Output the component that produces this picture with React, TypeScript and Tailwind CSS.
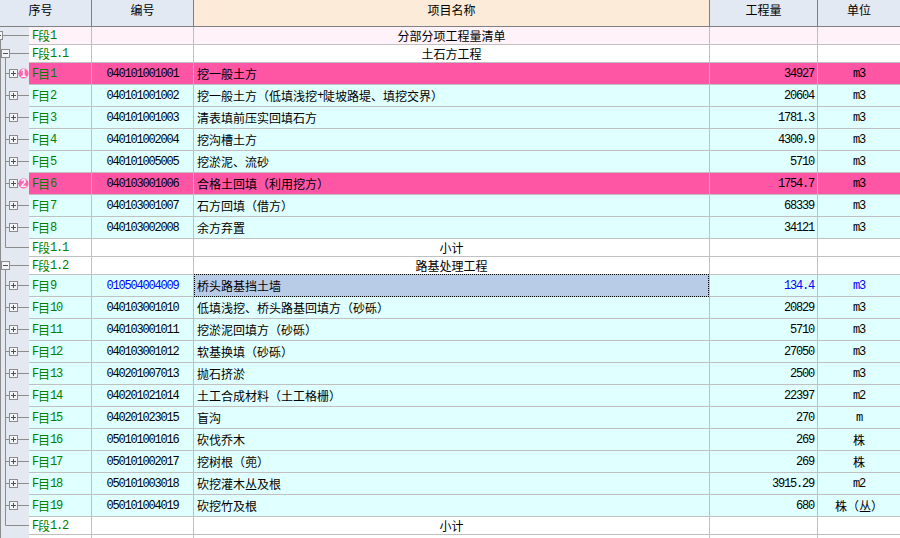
import React from "react";

type Kind = "root" | "seg" | "item" | "end";

type Row = {
  kind: Kind;
  label: string;
  code?: string;
  name?: string;
  qty?: string;
  unit?: string;
  bg: string;
  center?: boolean;
  badge?: number;
  blue?: boolean;
  selected?: boolean;
};

const CYAN = "bg-[#e0ffff]";
const PINK = "bg-[#ff55a5]";
const WHITE = "bg-white";
const ROSE = "bg-[#fff3f9]";

const rows: Row[] = [
  { kind: "root", label: "F段1", name: "分部分项工程量清单", center: true, bg: ROSE },
  { kind: "seg", label: "F段1.1", name: "土石方工程", center: true, bg: WHITE },
  { kind: "item", label: "F目1", code: "040101001001", name: "挖一般土方", qty: "34927", unit: "m3", bg: PINK, badge: 1 },
  { kind: "item", label: "F目2", code: "040101001002", name: "挖一般土方（低填浅挖+陡坡路堤、填挖交界）", qty: "20604", unit: "m3", bg: CYAN },
  { kind: "item", label: "F目3", code: "040101001003", name: "清表填前压实回填石方", qty: "1781.3", unit: "m3", bg: CYAN },
  { kind: "item", label: "F目4", code: "040101002004", name: "挖沟槽土方", qty: "4300.9", unit: "m3", bg: CYAN },
  { kind: "item", label: "F目5", code: "040101005005", name: "挖淤泥、流砂", qty: "5710", unit: "m3", bg: CYAN },
  { kind: "item", label: "F目6", code: "040103001006", name: "合格土回填（利用挖方）", qty: "1754.7", unit: "m3", bg: PINK, badge: 2 },
  { kind: "item", label: "F目7", code: "040103001007", name: "石方回填（借方）", qty: "68339", unit: "m3", bg: CYAN },
  { kind: "item", label: "F目8", code: "040103002008", name: "余方弃置", qty: "34121", unit: "m3", bg: CYAN },
  { kind: "end", label: "F段1.1", name: "小计", center: true, bg: WHITE },
  { kind: "seg", label: "F段1.2", name: "路基处理工程", center: true, bg: WHITE },
  { kind: "item", label: "F目9", code: "010504004009", name: "桥头路基挡土墙", qty: "134.4", unit: "m3", bg: CYAN, blue: true, selected: true },
  { kind: "item", label: "F目10", code: "040103001010", name: "低填浅挖、桥头路基回填方（砂砾）", qty: "20829", unit: "m3", bg: CYAN },
  { kind: "item", label: "F目11", code: "040103001011", name: "挖淤泥回填方（砂砾）", qty: "5710", unit: "m3", bg: CYAN },
  { kind: "item", label: "F目12", code: "040103001012", name: "软基换填（砂砾）", qty: "27050", unit: "m3", bg: CYAN },
  { kind: "item", label: "F目13", code: "040201007013", name: "抛石挤淤", qty: "2500", unit: "m3", bg: CYAN },
  { kind: "item", label: "F目14", code: "040201021014", name: "土工合成材料（土工格栅）", qty: "22397", unit: "m2", bg: CYAN },
  { kind: "item", label: "F目15", code: "040201023015", name: "盲沟", qty: "270", unit: "m", bg: CYAN },
  { kind: "item", label: "F目16", code: "050101001016", name: "砍伐乔木", qty: "269", unit: "株", bg: CYAN },
  { kind: "item", label: "F目17", code: "050101002017", name: "挖树根（蔸）", qty: "269", unit: "株", bg: CYAN },
  { kind: "item", label: "F目18", code: "050101003018", name: "砍挖灌木丛及根", qty: "3915.29", unit: "m2", bg: CYAN },
  { kind: "item", label: "F目19", code: "050101004019", name: "砍挖竹及根", qty: "680", unit: "株（丛）", bg: CYAN },
  { kind: "end", label: "F段1.2", name: "小计", center: true, bg: WHITE },
];

function T({ s }: { s: string }) {
  const parts = s.match(/[\x00-\x7f]+|[^\x00-\x7f]+/g) || [];
  return (
    <>
      {parts.map((p, i) =>
        /^[\x00-\x7f]/.test(p) ? (
          <span key={i} className="font-['Liberation_Mono',monospace] text-[12px] tracking-[-1.2px]">
            {p}
          </span>
        ) : (
          <span key={i}>{p}</span>
        )
      )}
    </>
  );
}

const LINE = "#8c8c8c";
const BOXFILL = "#f2f4f8";

function Box({ x, cy, plus }: { x: number; cy: number; plus: boolean }) {
  const cx = x + 4;
  return (
    <g>
      <rect x={x} y={cy - 4} width={8} height={8} fill={BOXFILL} stroke={LINE} strokeWidth={1} />
      <line x1={cx - 2.5} x2={cx + 2.5} y1={cy} y2={cy} stroke="#505050" strokeWidth={1} />
      {plus && <line x1={cx} x2={cx} y1={cy - 2.5} y2={cy + 2.5} stroke="#505050" strokeWidth={1} />}
    </g>
  );
}

function Tree({ kind, h, badge }: { kind: Kind; h: number; badge?: number }) {
  const cy = Math.floor((h - 1) / 2) + 0.5;
  return (
    <svg width={29} height={h} className="block">
      {kind === "root" && (
        <>
          <line x1={0.5} x2={0.5} y1={cy + 4} y2={h} stroke={LINE} />
          <Box x={-5.5} cy={cy} plus={false} />
          <line x1={2.5} x2={29} y1={cy} y2={cy} stroke={LINE} />
        </>
      )}
      {kind === "seg" && (
        <>
          <line x1={0.5} x2={0.5} y1={0} y2={h} stroke={LINE} />
          <line x1={5.5} x2={5.5} y1={cy + 4} y2={h} stroke={LINE} />
          <Box x={1.5} cy={cy} plus={false} />
          <line x1={9.5} x2={29} y1={cy} y2={cy} stroke={LINE} />
        </>
      )}
      {kind === "item" && (
        <>
          <line x1={0.5} x2={0.5} y1={0} y2={h} stroke={LINE} />
          <line x1={5.5} x2={5.5} y1={0} y2={h} stroke={LINE} />
          <line x1={5.5} x2={9.5} y1={cy} y2={cy} stroke={LINE} />
          <Box x={9.5} cy={cy} plus={true} />
          <line x1={17.5} x2={badge ? 19 : 29} y1={cy} y2={cy} stroke={LINE} />
          {badge && (
            <g>
              <circle cx={23.5} cy={cy} r={5} fill="#ff66b2" />
              <text
                x={23.5}
                y={cy + 3.5}
                textAnchor="middle"
                fontSize={10}
                fontWeight={700}
                fill="#ffffff"
                fontFamily="Liberation Sans, sans-serif"
              >
                {badge}
              </text>
            </g>
          )}
        </>
      )}
      {kind === "end" && (
        <>
          <line x1={0.5} x2={0.5} y1={0} y2={h} stroke={LINE} />
          <line x1={5.5} x2={5.5} y1={0} y2={cy} stroke={LINE} />
          <line x1={5.5} x2={29} y1={cy} y2={cy} stroke={LINE} />
        </>
      )}
    </svg>
  );
}

function GridRow({ r }: { r: Row }) {
  const tall = r.kind === "item";
  const h = tall ? 22 : 18;
  const txt = r.blue ? "text-[#0000ff]" : "text-black";
  const cell = `border-r border-b border-[#c0c0c0] flex items-center shrink-0 ${r.bg}`;
  return (
    <div className={`flex ${tall ? "h-[22px]" : "h-[18px]"}`}>
      <div className="w-[29px] shrink-0 bg-[#e4e8f0]">
        <Tree kind={r.kind} h={h} badge={r.badge} />
      </div>
      <div className={`w-[63px] pl-[3px] text-[#008000] whitespace-nowrap ${cell}`}>
        <T s={r.label} />
      </div>
      <div className={`w-[102px] justify-center ${txt} ${cell}`}>{r.code && <T s={r.code} />}</div>
      {r.selected ? (
        <div className="relative w-[516px] shrink-0 flex items-center pl-[3px] border-r border-b border-[#c0c0c0] bg-[#b8cce8] text-black whitespace-nowrap">
          <T s={r.name || ""} />
          <div className="absolute -top-px left-0 right-0 -bottom-px border border-dotted border-black"></div>
        </div>
      ) : (
        <div
          className={`w-[516px] whitespace-nowrap text-black ${r.center ? "justify-center" : "pl-[3px]"} ${cell}`}
        >
          {r.name && <T s={r.name} />}
        </div>
      )}
      <div className={`w-[108px] justify-end pr-[3px] ${txt} ${cell}`}>{r.qty && <T s={r.qty} />}</div>
      <div className={`flex-1 border-b border-[#c0c0c0] flex items-center justify-center ${txt} ${r.bg}`}>
        {r.unit && <T s={r.unit} />}
      </div>
    </div>
  );
}

export default function App() {
  return (
    <div className="w-[900px] h-[538px] overflow-hidden bg-white font-['Noto_Sans_CJK_SC',sans-serif] text-[12px] leading-[16px] text-black">
      <div className="flex h-[27px] border-b border-[#808080]">
        <div className="w-[92px] shrink-0 bg-[#e3e9f3] border-r border-[#808080] flex justify-center pt-[2px] pr-[10px]">
          序号
        </div>
        <div className="w-[102px] shrink-0 bg-[#e3e9f3] border-r border-[#808080] flex justify-center pt-[2px]">
          编号
        </div>
        <div className="w-[516px] shrink-0 bg-[#fdebd9] border-r border-[#808080] flex justify-center pt-[2px]">
          项目名称
        </div>
        <div className="w-[108px] shrink-0 bg-[#e3e9f3] border-r border-[#808080] flex justify-center pt-[2px]">
          工程量
        </div>
        <div className="flex-1 bg-[#e3e9f3] flex justify-center pt-[2px]">单位</div>
      </div>
      {rows.map((r, i) => (
        <GridRow key={i} r={r} />
      ))}
      <div className="flex h-[18px]">
        <div className="w-[29px] shrink-0 bg-[#e4e8f0]">
          <svg width={29} height={18} className="block">
            <line x1={0.5} x2={0.5} y1={0} y2={18} stroke={LINE} />
          </svg>
        </div>
        <div className="w-[63px] shrink-0 border-r border-[#c0c0c0] bg-white"></div>
        <div className="w-[102px] shrink-0 border-r border-[#c0c0c0] bg-white"></div>
        <div className="w-[516px] shrink-0 border-r border-[#c0c0c0] bg-white"></div>
        <div className="w-[108px] shrink-0 border-r border-[#c0c0c0] bg-white"></div>
        <div className="flex-1 bg-white"></div>
      </div>
    </div>
  );
}
